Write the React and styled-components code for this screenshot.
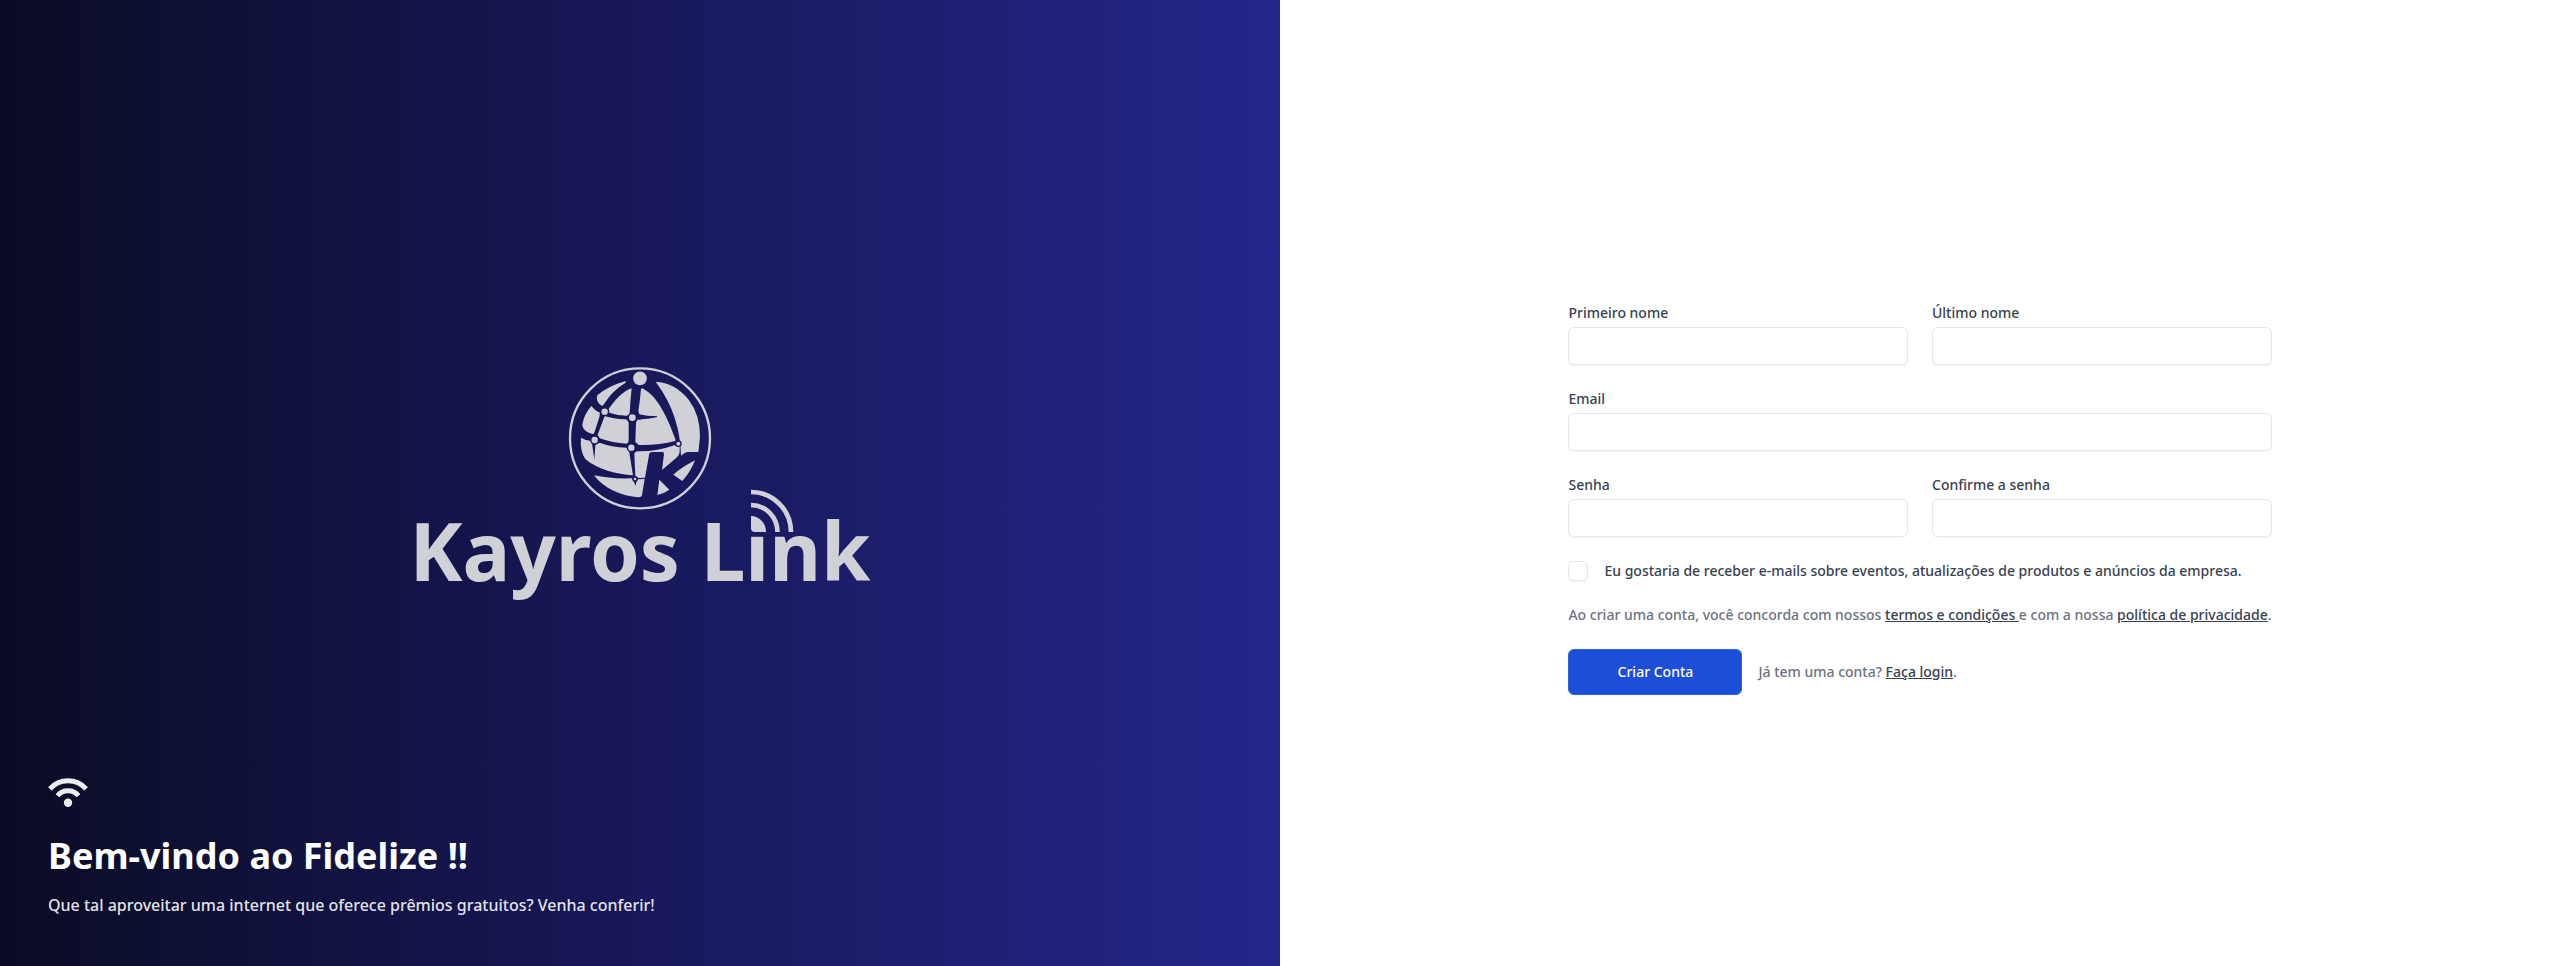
import React from "react";
import styled, { createGlobalStyle } from "styled-components";

const GlobalStyle = createGlobalStyle`
  *, *::before, *::after { box-sizing: border-box; }
  body { margin: 0; background: #fff; font-family: "Noto Sans", sans-serif; line-height: 1.5; }
  h2, p { margin: 0; }
`;

const Page = styled.section`
  display: grid;
  grid-template-columns: 1fr 1fr;
  height: 966px;
`;

const Hero = styled.section`
  display: grid;
  align-items: end;
  background: linear-gradient(90deg, #0a0c24 0%, #18185a 50%, #26268c 100%);

  & > * { grid-area: 1 / 1; }
`;

const Logo = styled.svg`
  display: block;
  width: 1280px;
  height: 966px;
`;

const Wordmark = styled.text`
  font: 700 80px "Noto Sans", sans-serif;
  fill: #d0d1d6;
`;

const Welcome = styled.div`
  padding: 48px;
  color: #fff;
`;

const WifiIcon = styled.svg`
  display: block;
  width: 40px;
  height: 36px;
`;

const Title = styled.h2`
  margin-top: 24px;
  font-size: 36px;
  line-height: 40px;
  font-weight: 700;
`;

const Lead = styled.p`
  margin-top: 16px;
  font-size: 16px;
  line-height: 26px;
  font-weight: 500;
  color: rgba(255, 255, 255, 0.9);
`;

const Main = styled.main`
  display: flex;
  align-items: center;
  justify-content: center;
`;

const Form = styled.form`
  display: grid;
  grid-template-columns: 1fr 1fr;
  gap: 24px;
  margin-top: 32px;
  font-size: 14px;
  line-height: 20px;
  font-weight: 500;
  color: #374151;
`;

const Field = styled.label`
  display: block;
  grid-column: ${(p) => (p.$wide ? "1 / -1" : "auto")};
`;

const Input = styled.input`
  display: block;
  width: 100%;
  height: 38px;
  margin-top: 4px;
  border: 1px solid #e5e7eb;
  border-radius: 6px;
  background: #fff;
  box-shadow: 0 1px 2px rgba(0, 0, 0, 0.05);
`;

const CheckRow = styled.label`
  display: flex;
  grid-column: 1 / -1;
  gap: 16px;
`;

const Checkbox = styled.input`
  appearance: none;
  width: 20px;
  height: 20px;
  margin: 0;
  border: 1px solid #e5e7eb;
  border-radius: 6px;
  background: #fff;
  box-shadow: 0 1px 2px rgba(0, 0, 0, 0.05);
`;

const Note = styled.p`
  color: #6b7280;
  white-space: nowrap;
`;

const Terms = styled(Note)`
  grid-column: 1 / -1;
`;

const Link = styled.a`
  color: #374151;
  text-decoration: underline;
`;

const Actions = styled.div`
  display: flex;
  grid-column: 1 / -1;
  align-items: center;
  gap: 16px;
`;

const Submit = styled.button`
  width: 174px;
  height: 46px;
  padding: 0;
  border: 1px solid #2563eb;
  border-radius: 6px;
  background: #1d4ed8;
  color: #fff;
  font: 500 14px/20px "Noto Sans", sans-serif;
`;

const TextField = ({ label, type = "text", wide }) => (
  <Field $wide={wide}>
    {label}
    <Input type={type} />
  </Field>
);

/* Globe drawn on a 480 x 465 grid, three units to the pixel. */
const Globe = () => (
  <g transform="translate(560 360) scale(.33333)" fill="#d0d1d6">
    <circle cx="240" cy="235" r="210" fill="none" stroke="#d0d1d6" strokeWidth="7" />
    <circle cx="240" cy="55" r="20.5" />
    <path d="M287 65Q345 68 386 119Q421 165 420 231L415 276H382Q373 278 363 287C362 214 342 139 287 65Z" />
    <path d="M197 63Q144 78 112 106C107 119 115 132 126 138Q132 133 135 128Q158 91 197 68Z" />
    <path d="M215 85C188 92 162 125 143 151L147 158Q174 167 200 167Q208 165 209 158Q211 120 215 85Z" />
    <path d="M243 87Q240 121 235 153Q236 163 243 167Q262 170 291 169V171Q260 179 235 178Q228 182 228 190L226 246L236 255Q292 257 346 243V237C326 181 295 110 250 86Q246 83 243 87Z" />
    <path d="M94 138Q72 163 67 193C67 205 76 217 98 222Q103 222 104 215L119 168V157Q109 155 94 138Z" />
    <path d="M134 168L113 224L119 235Q157 249 201 251Q207 246 206 238V189Q203 179 195 178Q160 177 134 168Z" />
    <path d="M63 233Q77 242 95 243Q99 269 103 299L106 256Q108 251 119 248Q154 261 199 263Q207 266 208 278L219 346C171 342 112 329 76 297Q59 272 63 233Z" />
    <path d="M345 255Q290 275 234 274Q225 274 223 282L226 347L235 354L255 353L268 280Q270 277 277 276H308Q312 276 312 283L306 330L351 292Q358 285 359 275V260Q353 260 345 255Z" />
    <path d="M102 346Q150 357 215 355L220 362L227 377L230 363L234 358L254 357L246 406Q244 412 237 412C184 409 131 385 102 346Z" />
    <path d="M405 301Q391 337 367 363L340 344Q363 323 405 301ZM298 359L328 389Q314 400 292 405Z" />
    <path d="M236 163Q262 169 291 169V171Q262 171 236 180Z" fill="#19195b" />
    <g>
      <circle cx="134" cy="155" r="14" fill="#19195b" /><circle cx="134" cy="155" r="9.5" />
      <circle cx="217" cy="173" r="14" fill="#19195b" /><circle cx="217" cy="173" r="10" />
      <circle cx="104" cy="240" r="14" fill="#19195b" /><circle cx="104" cy="240" r="9.5" />
      <circle cx="214" cy="263" r="14" fill="#19195b" /><circle cx="214" cy="263" r="9.5" />
      <circle cx="355" cy="251" r="10" fill="#19195b" /><circle cx="355" cy="251" r="6" />
      <circle cx="225" cy="357" r="8" fill="#19195b" /><circle cx="225" cy="357" r="4" />
    </g>
  </g>
);

const KayrosLogo = () => (
  <Logo viewBox="0 0 1280 966">
    <Globe />
    <Wordmark x="409.5" y="581" textLength="461" lengthAdjust="spacingAndGlyphs">Kayros Lınk</Wordmark>
    <path d="M751 516A15 16 0 0 1 766 532H755Q751 532 751 528Z" fill="#d0d1d6" />
    <path d="M751 505A26.5 27 0 0 1 777.5 532M751 492A40 40 0 0 1 791 532" fill="none" stroke="#d0d1d6" strokeWidth="4.7" />
  </Logo>
);

export default function App() {
  return (
    <>
      <GlobalStyle />
      <Page>
        <Hero>
          <KayrosLogo />
          <Welcome>
            <WifiIcon viewBox="0 0 40 36" fill="none" stroke="#ececf0" strokeWidth="5">
              <path d="M1.9 12.9A24.3 24.3 0 0 1 38.1 12.9M9.5 19.8A13.5 13.5 0 0 1 30.5 19.8" />
              <circle cx="20" cy="26.7" r="4.2" fill="#ececf0" stroke="none" />
            </WifiIcon>
            <Title>Bem-vindo ao Fidelize !!</Title>
            <Lead>Que tal aproveitar uma internet que oferece prêmios gratuitos? Venha conferir!</Lead>
          </Welcome>
        </Hero>
        <Main>
          <Form>
            <TextField label="Primeiro nome" />
            <TextField label="Último nome" />
            <TextField label="Email" type="email" wide />
            <TextField label="Senha" type="password" />
            <TextField label="Confirme a senha" type="password" />
            <CheckRow>
              <Checkbox type="checkbox" />
              Eu gostaria de receber e-mails sobre eventos, atualizações de produtos e anúncios da empresa.
            </CheckRow>
            <Terms>
              Ao criar uma conta, você concorda com nossos <Link>termos e condições </Link>e com a nossa{" "}
              <Link>política de privacidade</Link>.
            </Terms>
            <Actions>
              <Submit type="button">Criar Conta</Submit>
              <Note>
                Já tem uma conta? <Link>Faça login</Link>.
              </Note>
            </Actions>
          </Form>
        </Main>
      </Page>
    </>
  );
}
